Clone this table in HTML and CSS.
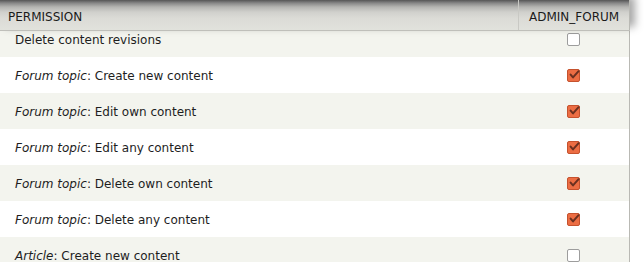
FILE: index.html
```html
<!DOCTYPE html>
<html>
<head>
<meta charset="utf-8">
<link rel="stylesheet" href="styles.css">
<title>Permissions</title>
</head>
<body>
<div class="perm-table">
  <div class="sticky-head">
    <div class="th th-name">PERMISSION</div>
    <div class="th th-role">ADMIN_FORUM</div>
  </div>
  <div class="rows">
    <div class="row odd">
      <div class="td td-name">Delete content revisions</div>
      <div class="td td-role"><span class="box"></span></div>
    </div>
    <div class="row even">
      <div class="td td-name"><em>Forum topic</em>: Create new content</div>
      <div class="td td-role"><span class="box checked"><svg viewBox="0 0 12 12"><path d="M2.6 5.6 L5 8.4 L10.6 2.2" /></svg></span></div>
    </div>
    <div class="row odd">
      <div class="td td-name"><em>Forum topic</em>: Edit own content</div>
      <div class="td td-role"><span class="box checked"><svg viewBox="0 0 12 12"><path d="M2.6 5.6 L5 8.4 L10.6 2.2" /></svg></span></div>
    </div>
    <div class="row even">
      <div class="td td-name"><em>Forum topic</em>: Edit any content</div>
      <div class="td td-role"><span class="box checked"><svg viewBox="0 0 12 12"><path d="M2.6 5.6 L5 8.4 L10.6 2.2" /></svg></span></div>
    </div>
    <div class="row odd">
      <div class="td td-name"><em>Forum topic</em>: Delete own content</div>
      <div class="td td-role"><span class="box checked"><svg viewBox="0 0 12 12"><path d="M2.6 5.6 L5 8.4 L10.6 2.2" /></svg></span></div>
    </div>
    <div class="row even">
      <div class="td td-name"><em>Forum topic</em>: Delete any content</div>
      <div class="td td-role"><span class="box checked"><svg viewBox="0 0 12 12"><path d="M2.6 5.6 L5 8.4 L10.6 2.2" /></svg></span></div>
    </div>
    <div class="row odd">
      <div class="td td-name"><em>Article</em>: Create new content</div>
      <div class="td td-role"><span class="box"></span></div>
    </div>
  </div>
</div>
</body>
</html>
```
FILE: styles.css
```css
html, body {
  margin: 0;
  padding: 0;
  background: #fff;
  overflow: hidden;
}

body {
  font-family: "DejaVu Sans", Verdana, sans-serif;
  font-size: 12px;
  color: #1e1e1e;
}

.perm-table {
  position: relative;
  width: 629px;
  border-right: 1px solid #b9b9b4;
  height: 262px;
}

/* header pinned over the scrolled rows */
.sticky-head {
  position: absolute;
  top: 0;
  left: 0;
  right: -1px;
  height: 30px;
  display: flex;
  border-bottom: 1px solid #bfbfba;
  background: linear-gradient(to bottom, #555 0px, #868686 3px, #b4b4b1 7px, #d0d0cc 12px, #dbdbd6 18px, #e1e2dc 30px);
  box-shadow: 5px -4px 8px rgba(0, 0, 0, 0.35);
  z-index: 2;
}

.th {
  display: flex;
  align-items: center;
  padding-top: 4px;
  box-sizing: border-box;
  color: #1a1a1a;
}

.th-name {
  flex: 1;
  padding-left: 8px;
}

.th-role {
  width: 112px;
  padding-left: 10px;
  border-left: 1px solid #c9c9c4;
  border-right: 1px solid #b9b9b4;
}

.rows {
  padding-top: 21px;
}

.row {
  display: flex;
  height: 36px;
  align-items: center;
}

.row.odd { background: #f3f4ee; }
.row.even { background: #fff; }

.td-name {
  flex: 1;
  padding-left: 15px;
  padding-top: 2px;
}

.td-role {
  width: 112px;
  display: flex;
  justify-content: center;
}

.box {
  display: block;
  width: 11px;
  height: 11px;
  border: 1px solid #9d9d9d;
  border-radius: 2px;
  background: #fff;
  position: relative;
}

.box.checked {
  background: #ec6d43;
  border-color: #c5522e;
}

.box svg {
  position: absolute;
  left: 0;
  top: -1px;
  width: 12px;
  height: 12px;
  overflow: visible;
}

.box svg path {
  fill: none;
  stroke: #6a3020;
  stroke-width: 2;
  stroke-linecap: round;
  stroke-linejoin: round;
}
```
